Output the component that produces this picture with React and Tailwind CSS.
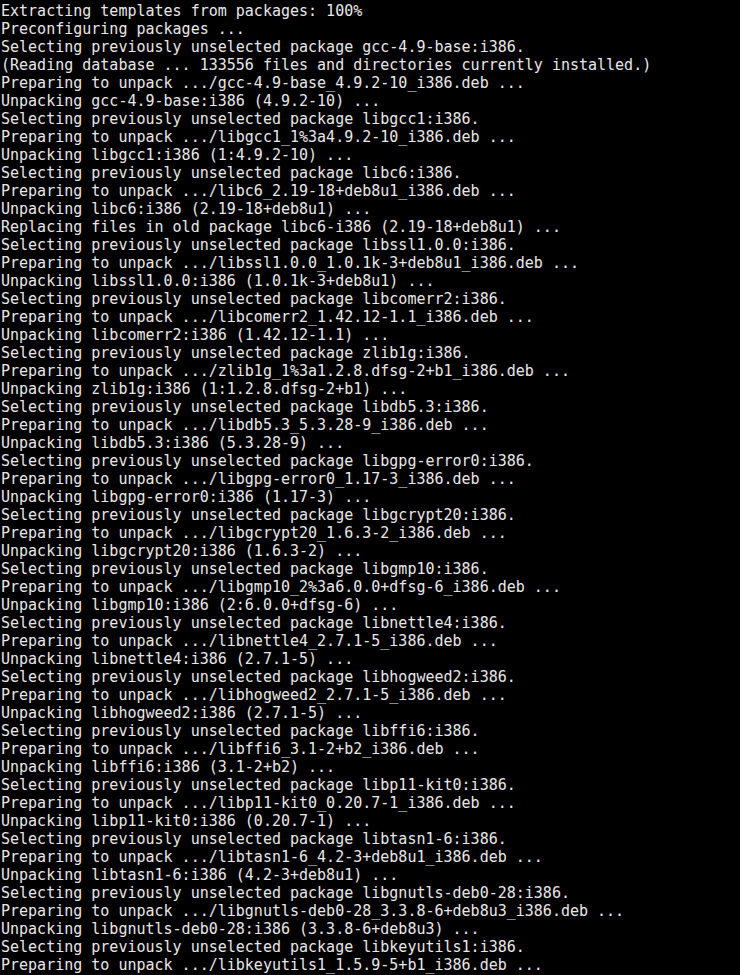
const lines = [
  "Extracting templates from packages: 100%",
  "Preconfiguring packages ...",
  "Selecting previously unselected package gcc-4.9-base:i386.",
  "(Reading database ... 133556 files and directories currently installed.)",
  "Preparing to unpack .../gcc-4.9-base_4.9.2-10_i386.deb ...",
  "Unpacking gcc-4.9-base:i386 (4.9.2-10) ...",
  "Selecting previously unselected package libgcc1:i386.",
  "Preparing to unpack .../libgcc1_1%3a4.9.2-10_i386.deb ...",
  "Unpacking libgcc1:i386 (1:4.9.2-10) ...",
  "Selecting previously unselected package libc6:i386.",
  "Preparing to unpack .../libc6_2.19-18+deb8u1_i386.deb ...",
  "Unpacking libc6:i386 (2.19-18+deb8u1) ...",
  "Replacing files in old package libc6-i386 (2.19-18+deb8u1) ...",
  "Selecting previously unselected package libssl1.0.0:i386.",
  "Preparing to unpack .../libssl1.0.0_1.0.1k-3+deb8u1_i386.deb ...",
  "Unpacking libssl1.0.0:i386 (1.0.1k-3+deb8u1) ...",
  "Selecting previously unselected package libcomerr2:i386.",
  "Preparing to unpack .../libcomerr2_1.42.12-1.1_i386.deb ...",
  "Unpacking libcomerr2:i386 (1.42.12-1.1) ...",
  "Selecting previously unselected package zlib1g:i386.",
  "Preparing to unpack .../zlib1g_1%3a1.2.8.dfsg-2+b1_i386.deb ...",
  "Unpacking zlib1g:i386 (1:1.2.8.dfsg-2+b1) ...",
  "Selecting previously unselected package libdb5.3:i386.",
  "Preparing to unpack .../libdb5.3_5.3.28-9_i386.deb ...",
  "Unpacking libdb5.3:i386 (5.3.28-9) ...",
  "Selecting previously unselected package libgpg-error0:i386.",
  "Preparing to unpack .../libgpg-error0_1.17-3_i386.deb ...",
  "Unpacking libgpg-error0:i386 (1.17-3) ...",
  "Selecting previously unselected package libgcrypt20:i386.",
  "Preparing to unpack .../libgcrypt20_1.6.3-2_i386.deb ...",
  "Unpacking libgcrypt20:i386 (1.6.3-2) ...",
  "Selecting previously unselected package libgmp10:i386.",
  "Preparing to unpack .../libgmp10_2%3a6.0.0+dfsg-6_i386.deb ...",
  "Unpacking libgmp10:i386 (2:6.0.0+dfsg-6) ...",
  "Selecting previously unselected package libnettle4:i386.",
  "Preparing to unpack .../libnettle4_2.7.1-5_i386.deb ...",
  "Unpacking libnettle4:i386 (2.7.1-5) ...",
  "Selecting previously unselected package libhogweed2:i386.",
  "Preparing to unpack .../libhogweed2_2.7.1-5_i386.deb ...",
  "Unpacking libhogweed2:i386 (2.7.1-5) ...",
  "Selecting previously unselected package libffi6:i386.",
  "Preparing to unpack .../libffi6_3.1-2+b2_i386.deb ...",
  "Unpacking libffi6:i386 (3.1-2+b2) ...",
  "Selecting previously unselected package libp11-kit0:i386.",
  "Preparing to unpack .../libp11-kit0_0.20.7-1_i386.deb ...",
  "Unpacking libp11-kit0:i386 (0.20.7-1) ...",
  "Selecting previously unselected package libtasn1-6:i386.",
  "Preparing to unpack .../libtasn1-6_4.2-3+deb8u1_i386.deb ...",
  "Unpacking libtasn1-6:i386 (4.2-3+deb8u1) ...",
  "Selecting previously unselected package libgnutls-deb0-28:i386.",
  "Preparing to unpack .../libgnutls-deb0-28_3.3.8-6+deb8u3_i386.deb ...",
  "Unpacking libgnutls-deb0-28:i386 (3.3.8-6+deb8u3) ...",
  "Selecting previously unselected package libkeyutils1:i386.",
  "Preparing to unpack .../libkeyutils1_1.5.9-5+b1_i386.deb ...",
];

export default function App() {
  return (
    <div className="w-[740px] h-[975px] bg-black overflow-hidden pt-[2px] pl-[1px] font-['DejaVu_Sans_Mono',monospace] text-[15px] leading-[18px] text-[#e8e8e8]">
      {lines.map((l, i) => (
        <div key={i} className="whitespace-pre h-[18px]">{l}</div>
      ))}
    </div>
  );
}
